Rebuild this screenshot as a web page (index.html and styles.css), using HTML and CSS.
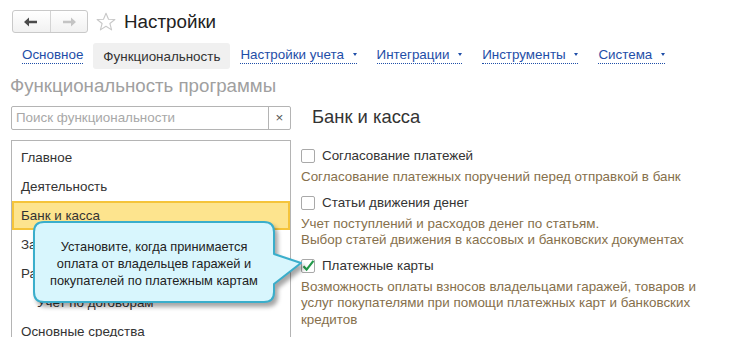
FILE: index.html
```html
<!DOCTYPE html>
<html lang="ru">
<head>
    <meta charset="UTF-8">
    <title>Настройки</title>
    <link rel="stylesheet" href="styles.css">
</head>
<body>
    <!-- Заголовок окна -->
    <div class="header">
        <div class="nav-buttons">
            <span class="nav-btn">
                <svg width="14" height="10" viewBox="0 0 14 10"><path d="M0 5 L5 0.5 L5 3.8 L13 3.8 L13 6.2 L5 6.2 L5 9.5 Z" fill="#4a4a4a"/></svg>
            </span>
            <span class="nav-btn">
                <svg width="14" height="10" viewBox="0 0 14 10"><path d="M14 5 L9 0.5 L9 3.8 L1 3.8 L1 6.2 L9 6.2 L9 9.5 Z" fill="#c4c4c4"/></svg>
            </span>
        </div>
        <svg class="star" width="20" height="20" viewBox="0 0 20 20"><polygon points="10,1.2 12.5,7.2 18.9,7.5 13.9,11.5 15.6,17.9 10,14.3 4.4,17.9 6.1,11.5 1.1,7.5 7.5,7.2" fill="none" stroke="#c8c8c8" stroke-width="1.1" stroke-linejoin="round"/></svg>
        <h1 class="title">Настройки</h1>
    </div>

    <!-- Вкладки -->
    <div class="tabs">
        <span class="tab"><span class="tab-link">Основное</span></span>
        <span class="tab active">Функциональность</span>
        <span class="tab"><span class="tab-link">Настройки учета <i class="caret"></i></span></span>
        <span class="tab"><span class="tab-link">Интеграции <i class="caret"></i></span></span>
        <span class="tab"><span class="tab-link">Инструменты <i class="caret"></i></span></span>
        <span class="tab"><span class="tab-link">Система <i class="caret"></i></span></span>
    </div>

    <h2 class="section-title">Функциональность программы</h2>

    <div class="main">
        <div class="left">
            <div class="search">
                <span class="search-input">Поиск функциональности</span>
                <span class="search-clear">×</span>
            </div>
            <ul class="list">
                <li>Главное</li>
                <li>Деятельность</li>
                <li class="selected">Банк и касса</li>
                <li>Зарплата</li>
                <li>Расчеты с контрагентами</li>
                <li class="sub">Учет по договорам</li>
                <li>Основные средства</li>
            </ul>
        </div>

        <div class="right">
            <h3 class="group-title">Банк и касса</h3>

            <div class="option">
                <label class="check"><span class="box"></span>Согласование платежей</label>
                <p class="hint">Согласование платежных поручений перед отправкой в банк</p>
            </div>
            <div class="option">
                <label class="check"><span class="box"></span>Статьи движения денег</label>
                <p class="hint">Учет поступлений и расходов денег по статьям.<br>Выбор статей движения в кассовых и банковских документах</p>
            </div>
            <div class="option">
                <label class="check"><span class="box checked"><svg width="14" height="14" viewBox="0 0 14 14"><path d="M2.5 7.2 L5.6 10.6 L12.4 1.8" fill="none" stroke="#23994a" stroke-width="2.2"/></svg></span>Платежные карты</label>
                <p class="hint">Возможность оплаты взносов владельцами гаражей, товаров и услуг покупателями при помощи платежных карт и банковских кредитов</p>
            </div>
            <div class="option">
                <label class="check"><span class="box"></span>Кредиты и займы</label>
            </div>
        </div>
    </div>

    <!-- Подсказка -->
    <div class="callout">
        <svg class="callout-shape" width="274" height="88" viewBox="0 0 274 88">
            <path d="M11 1 H231 Q241 1 241 11 V33 L268 42 L241 63 V71 Q241 81 231 81 H11 Q1 81 1 71 V11 Q1 1 11 1 Z" fill="#d8f6fd" stroke="#3aaecb" stroke-width="2" stroke-linejoin="round"/>
        </svg>
        <div class="callout-text">Установите, когда принимается<br>оплата от владельцев гаражей и<br>покупателей по платежным картам</div>
    </div>
</body>
</html>
```

FILE: styles.css
```css
:root {
    --link-color: #1e4ea8;
    --hint-color: #86704c;
    --border-color: #b4b4b4;
}

body {
    margin: 0;
    width: 740px;
    height: 337px;
    overflow: hidden;
    position: relative;
    font-family: "Liberation Sans", Arial, sans-serif;
    font-size: 13.4px;
    color: #333;
    background: #fff;
}

.header {
    display: flex;
    align-items: center;
    padding: 10px 0 0 12px;
    height: 23px;
}

.nav-buttons {
    display: flex;
    width: 76px;
    height: 23px;
    box-sizing: border-box;
    border: 1px solid #c9c9c9;
    border-radius: 3px;
    background: linear-gradient(#ffffff, #f1f1f1);
}

.nav-btn {
    flex: 1;
    display: flex;
    align-items: center;
    justify-content: center;
}

.nav-btn + .nav-btn {
    border-left: 1px solid #d4d4d4;
}

.star {
    margin-left: 8px;
}

.title {
    margin: 0 0 0 8px;
    font-size: 18.8px;
    font-weight: normal;
    color: #222;
}

.tabs {
    display: flex;
    margin: 10px 0 0 12px;
    height: 26px;
}

.tab {
    display: flex;
    align-items: center;
    padding: 0 10px;
    color: var(--link-color);
}

.tab-link {
    border-bottom: 1px dotted var(--link-color);
    line-height: 14px;
    padding-bottom: 1px;
}

.tab.active {
    background: #f0f0f0;
    border-radius: 3px;
    color: #333;
}

.caret {
    display: inline-block;
    width: 0;
    height: 0;
    margin: 0 0 2px 5px;
    border-left: 2.5px solid transparent;
    border-right: 2.5px solid transparent;
    border-top: 3px solid var(--link-color);
    vertical-align: middle;
}

.section-title {
    margin: 7px 0 0 10px;
    font-size: 18.7px;
    font-weight: normal;
    color: #a0a0a0;
    line-height: 20px;
}

.main {
    display: flex;
    gap: 10px;
    margin: 10px 0 0 11px;
}

.left {
    width: 280px;
    flex-shrink: 0;
}

.search {
    display: flex;
    height: 24px;
    box-sizing: border-box;
    border: 1px solid var(--border-color);
    border-radius: 2px;
}

.search-input {
    flex: 1;
    padding-left: 4px;
    line-height: 22px;
    color: #a8a8a8;
}

.search-clear {
    width: 21px;
    border-left: 1px solid var(--border-color);
    text-align: center;
    line-height: 22px;
    color: #555;
}

.list {
    list-style: none;
    margin: 10px 0 0;
    padding: 2px 0 0;
    border: 1px solid var(--border-color);
    height: 200px;
}

.list li {
    height: 29px;
    line-height: 29px;
    padding-left: 9px;
    color: #333;
}

.list li.selected {
    height: 25px;
    line-height: 25px;
    background: #fde48e;
    border: 2px solid #f5c43a;
    padding-left: 7px;
}

.list li.sub {
    padding-left: 25px;
}

.right {
    flex: 1;
}

.group-title {
    margin: 1px 0 0 11px;
    font-size: 18.4px;
    font-weight: normal;
    color: #333;
    line-height: 20px;
}

.option {
    margin-top: 9px;
}

.option:first-of-type {
    margin-top: 21px;
}

.check {
    display: flex;
    align-items: center;
    gap: 7px;
    line-height: 16px;
    color: #333;
}

.box {
    width: 14px;
    height: 14px;
    box-sizing: border-box;
    border: 1px solid #a9a9a9;
    border-radius: 2px;
    background: #fff;
    display: flex;
}

.box.checked svg {
    margin: -1px;
}

.hint {
    margin: 5px 0 0;
    line-height: 16.5px;
    color: var(--hint-color);
    width: 410px;
}

.callout {
    position: absolute;
    left: 33px;
    top: 221px;
    width: 274px;
    height: 88px;
}

.callout-shape {
    position: absolute;
    left: 0;
    top: 0;
    filter: drop-shadow(3px 4px 2px rgba(0, 0, 0, 0.35));
}

.callout-text {
    position: absolute;
    left: 1px;
    top: 17px;
    width: 240px;
    text-align: center;
    font-size: 12.8px;
    line-height: 17px;
    color: #222;
}
```
